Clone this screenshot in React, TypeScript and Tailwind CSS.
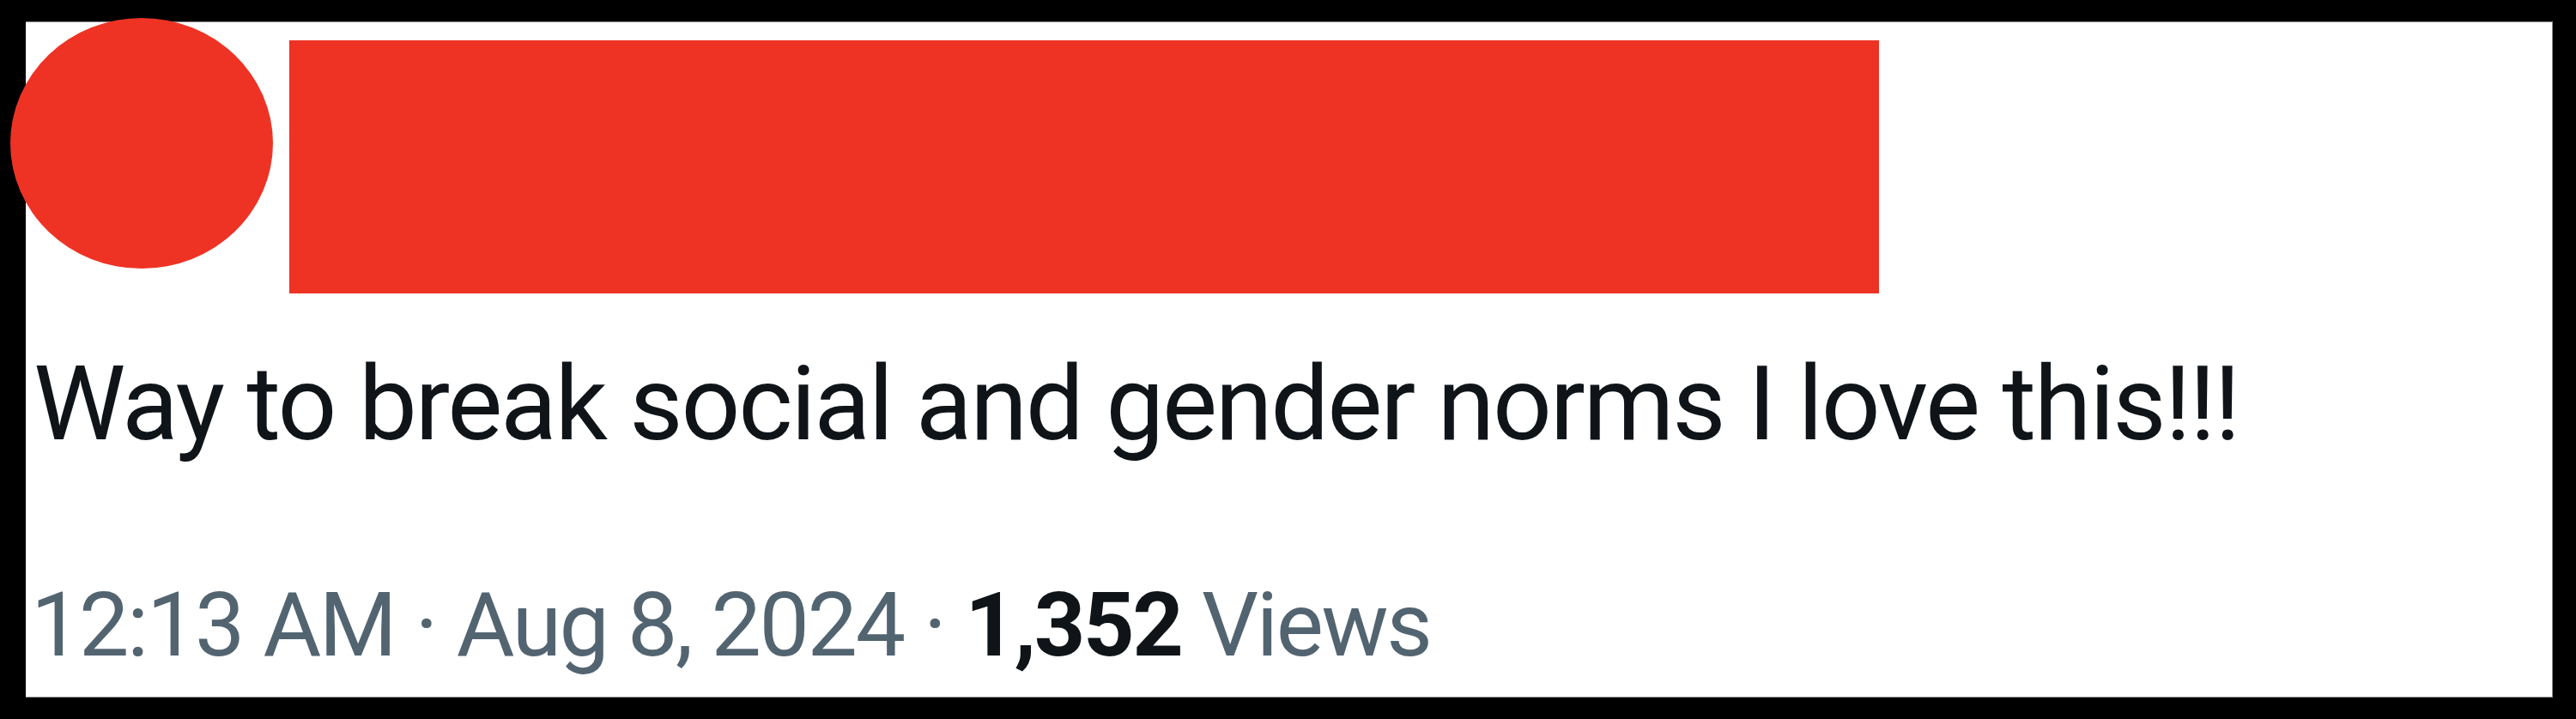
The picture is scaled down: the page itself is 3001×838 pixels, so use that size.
export default function App() {
  return (
    <div className="w-[3001px] h-[838px] bg-black pt-[25px] pl-[30px] pr-[27px] pb-[25px]">
      <div className="h-full bg-white border-t border-r border-b border-[#8c8c8c] flex flex-col font-['Roboto',sans-serif]">
        <div className="flex items-start">
          <div className="-ml-[18px] -mt-[5px] w-[306px] h-[292px] rounded-[50%] bg-[#ee3324] shrink-0" />
          <div className="ml-[19px] mt-[21px] w-[1852px] h-[295px] bg-[#ee3324] shrink-0" />
        </div>
        <p className="mt-[69px] pl-[9px] text-[121px] leading-none tracking-[-2.3px] text-[#0f1419] whitespace-nowrap">
          Way to break social and gender norms I love this!!!
        </p>
        <p className="mt-[145px] pl-[6px] text-[104px] leading-none tracking-[-2.4px] text-[#536471] whitespace-nowrap">
          12:13 AM · Aug 8, 2024 · <span className="font-bold text-[#0f1419]">1,352</span> Views
        </p>
      </div>
    </div>
  );
}
